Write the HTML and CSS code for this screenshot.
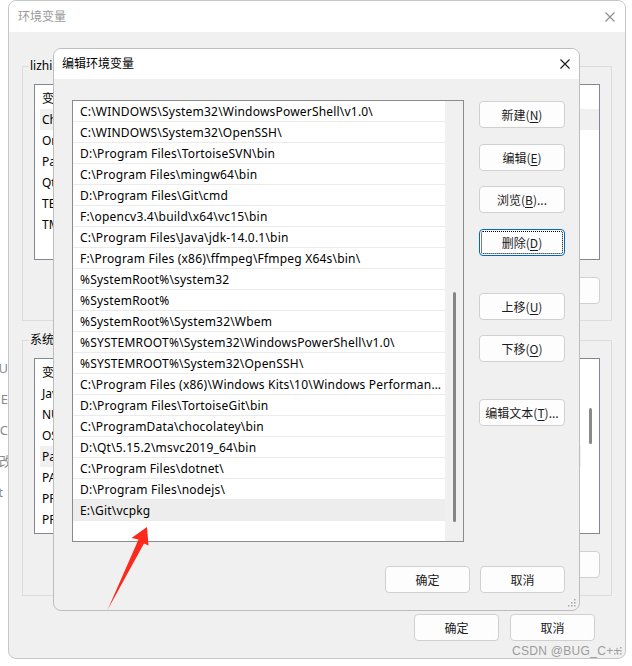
FILE: index.html
```html
<!DOCTYPE html>
<html lang="zh-CN">
<head>
<meta charset="utf-8">
<title>环境变量</title>
<link rel="stylesheet" href="styles.css">
</head>
<body>
<div class="desk">
  <div class="strip">
    <div class="strip-line s1">NU</div>
    <div class="strip-line s2">NE</div>
    <div class="strip-line s3">oC</div>
    <div class="strip-line s4">修改</div>
    <div class="strip-line s5">ist</div>
  </div>

  <section class="win outer">
    <header class="titlebar">
      <span class="title muted">环境变量</span>
      <svg class="close-x muted-x" viewBox="0 0 10 10" width="10" height="10"><path d="M0.5 0.5L9.5 9.5M9.5 0.5L0.5 9.5"/></svg>
    </header>
    <div class="outer-body">
      <div class="group g1">
        <span class="group-label">lizhi 的用户变量(<u>U</u>)</span>
        <div class="listview">
          <div class="lv-rows">
            <div class="lv-row"><span class="c1">变量</span><span>值</span></div>
            <div class="lv-row sel"><span class="c1">ChocolateyInstall</span><span>C:\ProgramData\chocolatey\bin</span></div>
            <div class="lv-row"><span class="c1">OneDrive</span><span>C:\Users\lizhi\OneDrive</span></div>
            <div class="lv-row"><span class="c1">Path</span><span>C:\Users\lizhi\AppData\Local</span></div>
            <div class="lv-row"><span class="c1">Qt</span><span>D:\Qt</span></div>
            <div class="lv-row"><span class="c1">TEMP</span><span>C:\Users\lizhi\AppData\Local\Temp</span></div>
            <div class="lv-row"><span class="c1">TMP</span><span>C:\Users\lizhi\AppData\Local\Temp</span></div>
          </div>
        </div>
        <div class="btn-row">
          <button class="btn">新建(<u>N</u>)...</button>
          <button class="btn">编辑(<u>E</u>)...</button>
          <button class="btn">删除(<u>D</u>)</button>
        </div>
      </div>

      <div class="group g2">
        <span class="group-label">系统变量(<u>S</u>)</span>
        <div class="listview">
          <div class="lv-rows">
            <div class="lv-row"><span class="c1">变量</span><span>值</span></div>
            <div class="lv-row"><span class="c1">JavaHome</span><span>C:\Program Files\Java</span></div>
            <div class="lv-row"><span class="c1">NUMBER_OF_PROCESSORS</span><span>16</span></div>
            <div class="lv-row"><span class="c1">OS</span><span>Windows_NT</span></div>
            <div class="lv-row sel"><span class="c1">Path</span><span>C:\WINDOWS\system32</span></div>
            <div class="lv-row"><span class="c1">PATHEXT</span><span>.COM;.EXE;.BAT;.CMD</span></div>
            <div class="lv-row"><span class="c1">PROCESSOR_ARCHITECTURE</span><span>AMD64</span></div>
            <div class="lv-row"><span class="c1">PROCESSOR_IDENTIFIER</span><span>Intel64 Family 6</span></div>
          </div>
          <div class="lv-scroll"><div class="lv-thumb"></div></div>
        </div>
        <div class="btn-row">
          <button class="btn">新建(<u>W</u>)...</button>
          <button class="btn">编辑(<u>I</u>)...</button>
          <button class="btn">删除(<u>L</u>)</button>
        </div>
      </div>

      <div class="actions outer-actions">
        <button class="btn">确定</button>
        <button class="btn">取消</button>
      </div>
    </div>
    <svg class="grip" viewBox="0 0 8 8" width="8" height="8"><rect x="6" y="0" width="1.5" height="1.5"/><rect x="3" y="3" width="1.5" height="1.5"/><rect x="6" y="3" width="1.5" height="1.5"/><rect x="0" y="6" width="1.5" height="1.5"/><rect x="3" y="6" width="1.5" height="1.5"/><rect x="6" y="6" width="1.5" height="1.5"/></svg>
  </section>

  <section class="win inner">
    <header class="titlebar">
      <span class="title">编辑环境变量</span>
      <svg class="close-x" viewBox="0 0 10 10" width="10" height="10"><path d="M0.5 0.5L9.5 9.5M9.5 0.5L0.5 9.5"/></svg>
    </header>
    <div class="inner-body">
      <div class="inner-main">
        <div class="pathlist">
          <div class="pl-rows">
            <div class="pl-row">C:\WINDOWS\System32\WindowsPowerShell\v1.0\</div>
            <div class="pl-row">C:\WINDOWS\System32\OpenSSH\</div>
            <div class="pl-row">D:\Program Files\TortoiseSVN\bin</div>
            <div class="pl-row">C:\Program Files\mingw64\bin</div>
            <div class="pl-row">D:\Program Files\Git\cmd</div>
            <div class="pl-row">F:\opencv3.4\build\x64\vc15\bin</div>
            <div class="pl-row">C:\Program Files\Java\jdk-14.0.1\bin</div>
            <div class="pl-row">F:\Program Files (x86)\ffmpeg\Ffmpeg X64s\bin\</div>
            <div class="pl-row">%SystemRoot%\system32</div>
            <div class="pl-row">%SystemRoot%</div>
            <div class="pl-row">%SystemRoot%\System32\Wbem</div>
            <div class="pl-row">%SYSTEMROOT%\System32\WindowsPowerShell\v1.0\</div>
            <div class="pl-row">%SYSTEMROOT%\System32\OpenSSH\</div>
            <div class="pl-row">C:\Program Files (x86)\Windows Kits\10\Windows Performance Toolkit\</div>
            <div class="pl-row">D:\Program Files\TortoiseGit\bin</div>
            <div class="pl-row">C:\ProgramData\chocolatey\bin</div>
            <div class="pl-row">D:\Qt\5.15.2\msvc2019_64\bin</div>
            <div class="pl-row">C:\Program Files\dotnet\</div>
            <div class="pl-row">D:\Program Files\nodejs\</div>
            <div class="pl-row sel">E:\Git\vcpkg</div>
          </div>
          <div class="pl-scroll"><div class="pl-thumb"></div></div>
        </div>
        <div class="side-btns">
          <button class="btn">新建(<u>N</u>)</button>
          <button class="btn">编辑(<u>E</u>)</button>
          <button class="btn">浏览(<u>B</u>)...</button>
          <button class="btn focus">删除(<u>D</u>)</button>
          <button class="btn grp">上移(<u>U</u>)</button>
          <button class="btn">下移(<u>O</u>)</button>
          <button class="btn grp">编辑文本(<u>T</u>)...</button>
        </div>
      </div>
      <div class="actions inner-actions">
        <button class="btn">确定</button>
        <button class="btn">取消</button>
      </div>
    </div>
    <svg class="grip" viewBox="0 0 8 8" width="8" height="8"><rect x="6" y="0" width="1.5" height="1.5"/><rect x="3" y="3" width="1.5" height="1.5"/><rect x="6" y="3" width="1.5" height="1.5"/><rect x="0" y="6" width="1.5" height="1.5"/><rect x="3" y="6" width="1.5" height="1.5"/><rect x="6" y="6" width="1.5" height="1.5"/></svg>
  </section>

  <svg class="arrow" viewBox="0 0 56 96" width="56" height="96"><polygon points="47,7 31.5,18 38.5,19.5 7.5,90 44,23.5 48.5,25.5"/></svg>
  <div class="watermark">CSDN @BUG_C++</div>
</div>
</body>
</html>
```

FILE: styles.css
```css
* { box-sizing: border-box; }

body {
  margin: 0;
  background: #ffffff;
  font-family: "Noto Sans", "Noto Sans CJK SC", sans-serif;
  font-size: 12px;
  color: #000;
}

.desk {
  position: relative;
  width: 632px;
  height: 666px;
  overflow: hidden;
  background: #ffffff;
}

/* background window peeking at the left edge */
.strip {
  position: absolute;
  left: 0;
  top: 359px;
  width: 8px;
  overflow: hidden;
  color: #8a8a8a;
  font-size: 13px;
}
.strip-line {
  height: 31px;
  line-height: 18px;
  display: flex;
  justify-content: flex-end;
  white-space: nowrap;
}
.strip-line.s4 { margin-right: -4px; }
.strip-line.s5 { margin-right: 5px; }

/* windows */
.win {
  position: absolute;
  background: #f0f0f0;
  border: 1px solid #c6c6c6;
  border-radius: 8px;
  overflow: hidden;
  display: flex;
  flex-direction: column;
}
.outer { left: 8px; top: 0; width: 618px; height: 659px; }
.inner { left: 53px; top: 48px; width: 527px; height: 563px; border-color: #bdbdbd; }

.titlebar {
  background: #ffffff;
  height: 31px;
  flex: none;
  display: flex;
  align-items: center;
  justify-content: space-between;
  padding: 0 9px 0 9px;
}
.outer .titlebar { padding: 0 10px 0 9px; }
.inner .titlebar { height: 30px; padding: 0 9px 0 8px; }
.title { font-size: 12px; line-height: 16px; }
.muted { color: #9a9a9a; }
.close-x { stroke: #1a1a1a; stroke-width: 1.1; fill: none; }
.muted-x { stroke: #8c8c8c; }

/* outer dialog content */
.outer-body {
  padding: 34px 13px 0 13px;
  display: flex;
  flex-direction: column;
}
.group {
  border: 1px solid #dcdcdc;
  padding: 0 11px;
  display: flex;
  flex-direction: column;
}
.g1 { height: 255px; }
.g2 { height: 256px; margin-top: 19px; }
.group-label {
  align-self: flex-start;
  margin: -9px 0 0 -5px;
  padding: 0 1px;
  height: 16px;
  line-height: 16px;
  background: #f0f0f0;
}
.listview {
  margin-top: 10px;
  height: 176px;
  background: #fff;
  border: 1px solid #828790;
  display: flex;
  padding: 3px 0 0 5px;
}
.lv-rows { flex: 1; display: flex; flex-direction: column; }
.lv-row {
  height: 21px;
  line-height: 21px;
  display: flex;
  white-space: nowrap;
  padding-left: 2px;
}
.lv-row.sel { background: #f0f0f0; }
.lv-row .c1 { width: 180px; }
.lv-scroll {
  width: 18px;
  margin-top: -3px;
  display: flex;
  justify-content: center;
}
.lv-thumb {
  width: 3px;
  height: 36px;
  margin-top: 49px;
  background: #8a8a8a;
  border-radius: 2px;
}

.btn-row {
  margin-top: 17px;
  display: flex;
  justify-content: flex-end;
  gap: 10px;
}

.btn {
  width: 85px;
  height: 27px;
  background: #fdfdfd;
  border: 1px solid #d0d0d0;
  border-radius: 4px;
  font-family: "Noto Sans CJK SC", "Noto Sans", sans-serif;
  font-size: 12px;
  color: #1b1b1b;
  padding: 0;
  display: flex;
  align-items: center;
  justify-content: center;
  white-space: nowrap;
}
.btn u { text-underline-offset: 2px; }
.btn.focus {
  border: 1px solid #0067c0;
  outline: 1px dotted #000;
  outline-offset: -3px;
}

.actions {
  display: flex;
  justify-content: flex-end;
}
.outer-actions {
  margin-top: 18px;
  margin-right: 17px;
  gap: 11px;
}

/* inner dialog content */
.inner-body {
  padding: 21px 14px 0 18px;
  display: flex;
  flex-direction: column;
}
.inner-main { display: flex; }
.pathlist {
  width: 392px;
  height: 442px;
  background: #fff;
  border: 1px solid #8b8b8b;
  display: flex;
}
.pl-rows { width: 372px; display: flex; flex-direction: column; }
.pl-row {
  height: 21px;
  line-height: 20px;
  padding-top: 1px;
  padding-left: 7px;
  padding-right: 2px;
  border-bottom: 1px solid #ebebeb;
  white-space: nowrap;
  overflow: hidden;
  text-overflow: ellipsis;
  letter-spacing: 0.2px;
}
.pl-row.sel { background: #ededed; }
.pl-scroll {
  flex: 1;
  background: #f0f0f0;
  display: flex;
  justify-content: center;
}
.pl-thumb {
  width: 3px;
  height: 230px;
  margin-top: 191px;
  background: #858585;
  border-radius: 2px;
}

.side-btns {
  margin-left: 15px;
  padding-top: 1px;
  display: flex;
  flex-direction: column;
  gap: 15.67px;
}
.side-btns .btn { width: 86px; }
.side-btns .btn.grp { margin-top: 21px; }

.inner-actions {
  margin-top: 24px;
  gap: 10px;
}

.grip {
  position: absolute;
  right: 3px;
  bottom: 3px;
  fill: #a8a8a8;
}

.arrow {
  position: absolute;
  left: 100px;
  top: 520px;
  fill: #fc2a1c;
}

.watermark {
  position: absolute;
  left: 512px;
  top: 643px;
  font-family: "Liberation Sans", sans-serif;
  font-size: 12px;
  line-height: 16px;
  color: #9c9c9c;
  letter-spacing: 0.3px;
}
```
